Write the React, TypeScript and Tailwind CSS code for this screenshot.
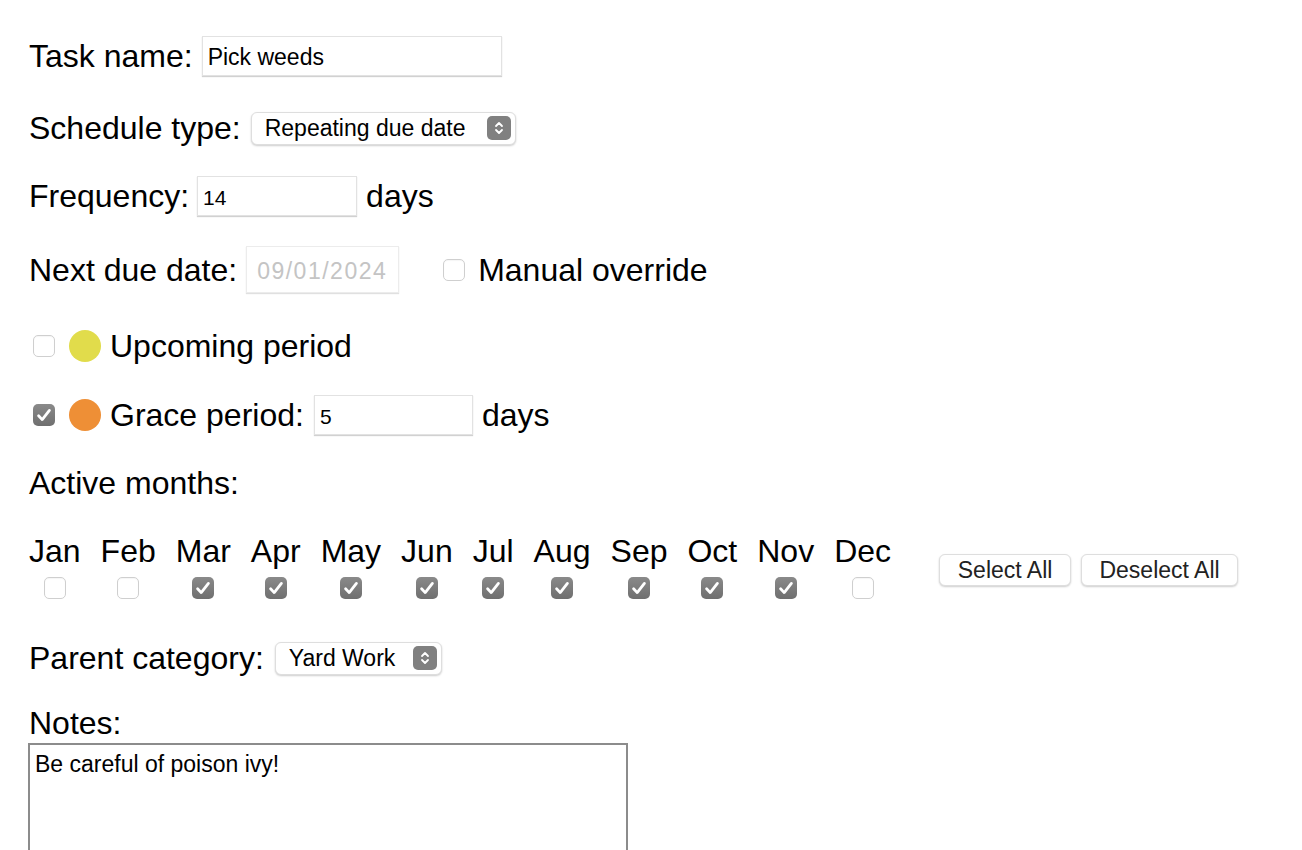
import { ReactNode } from "react";

const font = { fontFamily: '"Liberation Sans", Arial, sans-serif' };

const Check = ({ checked }: { checked: boolean }) => {
  if (!checked) {
    return (
      <div className="h-[22px] w-[22px] shrink-0 rounded-[5px] border border-[#cfcfcf] bg-white shadow-[inset_0_1px_1px_rgba(0,0,0,0.04)]"></div>
    );
  }
  return (
    <div className="flex h-[22px] w-[22px] shrink-0 items-center justify-center rounded-[5px] bg-gradient-to-b from-[#8a8a8a] to-[#6f6f6f]">
      <svg width="16" height="16" viewBox="0 0 16 16" fill="none">
        <path
          d="M2.6 8.8 L6.2 12.6 L13.4 3.4"
          stroke="white"
          strokeWidth="2.8"
          strokeLinecap="round"
          strokeLinejoin="round"
        />
      </svg>
    </div>
  );
};

const TextBox = ({
  value,
  width,
  size = "text-[23px]",
}: {
  value: string;
  width: string;
  size?: string;
}) => (
  <div
    className={`flex h-[40px] ${width} items-center border border-[#e2e2e2] bg-white pl-[5px] pt-[4px] text-black shadow-[0_1px_1px_rgba(0,0,0,0.18)] ${size}`}
  >
    {value}
  </div>
);

const Select = ({ value, width }: { value: string; width: string }) => (
  <div
    className={`flex h-[33px] ${width} items-center justify-between rounded-[6px] border border-[#dedede] bg-white pl-[13px] pr-[4px] text-[23px] shadow-[0_1px_2px_rgba(0,0,0,0.2)]`}
  >
    <span>{value}</span>
    <div className="flex h-[24px] w-[24px] items-center justify-center rounded-[5px] bg-[#808080]">
      <svg width="12" height="16" viewBox="0 0 12 16" fill="none">
        <path
          d="M3 6 L6 3 L9 6 M3 10 L6 13 L9 10"
          stroke="white"
          strokeWidth="1.8"
          strokeLinecap="round"
          strokeLinejoin="round"
        />
      </svg>
    </div>
  </div>
);

const Row = ({ h, children }: { h: string; children: ReactNode }) => (
  <div className={`flex ${h} items-center`}>{children}</div>
);

const months = [
  ["Jan", false],
  ["Feb", false],
  ["Mar", true],
  ["Apr", true],
  ["May", true],
  ["Jun", true],
  ["Jul", true],
  ["Aug", true],
  ["Sep", true],
  ["Oct", true],
  ["Nov", true],
  ["Dec", false],
] as const;

export default function App() {
  return (
    <div
      className="min-h-[850px] w-full bg-white pl-[29px] pt-[20px] text-[32px] text-black"
      style={font}
    >
      <Row h="h-[71px]">
        <span>Task name:</span>
        <div className="ml-[9px]">
          <TextBox value="Pick weeds" width="w-[300px]" />
        </div>
      </Row>

      <Row h="h-[74px]">
        <span>Schedule type:</span>
        <div className="ml-[10px]">
          <Select value="Repeating due date" width="w-[265px]" />
        </div>
      </Row>

      <Row h="h-[61px]">
        <span>Frequency:</span>
        <div className="ml-[8px]">
          <TextBox value="14" width="w-[160px]" size="text-[21px]" />
        </div>
        <span className="ml-[9px]">days</span>
      </Row>

      <Row h="h-[87px]">
        <span>Next due date:</span>
        <div className="ml-[9px] flex h-[47px] w-[153px] items-center border border-[#ececec] bg-white pl-[10px] pt-[4px] text-[23px] tracking-[1.5px] text-[#c4c4c4] shadow-[0_1px_1px_rgba(0,0,0,0.12)]">
          09/01/2024
        </div>
        <div className="ml-[44px]">
          <Check checked={false} />
        </div>
        <span className="ml-[13px]">Manual override</span>
      </Row>

      <Row h="h-[65px]">
        <div className="ml-[4px]">
          <Check checked={false} />
        </div>
        <div className="ml-[14px] h-[32px] w-[32px] rounded-full bg-[#e1dc4b]"></div>
        <span className="ml-[9px]">Upcoming period</span>
      </Row>

      <Row h="h-[74px]">
        <div className="ml-[4px]">
          <Check checked={true} />
        </div>
        <div className="ml-[14px] h-[32px] w-[32px] rounded-full bg-[#ee8f36]"></div>
        <span className="ml-[9px]">Grace period:</span>
        <div className="ml-[10px]">
          <TextBox value="5" width="w-[159px]" size="text-[21px]" />
        </div>
        <span className="ml-[9px]">days</span>
      </Row>

      <Row h="h-[62px]">
        <span>Active months:</span>
      </Row>

      <div className="flex h-[96px] items-start pt-[19px]">
        <div className="flex gap-[20px]">
          {months.map(([m, on]) => (
            <div key={m} className="flex flex-col items-center gap-[7px]">
              <span className="leading-[37px]">{m}</span>
              <Check checked={on} />
            </div>
          ))}
        </div>
        <div className="ml-[48px] mt-[21px] flex gap-[10px] text-[23px]">
          <div className="flex h-[32px] w-[132px] items-center justify-center rounded-[6px] border border-[#dedede] bg-white text-[#222] shadow-[0_1px_2px_rgba(0,0,0,0.2)]">
            Select All
          </div>
          <div className="flex h-[32px] w-[157px] items-center justify-center rounded-[6px] border border-[#dedede] bg-white text-[#222] shadow-[0_1px_2px_rgba(0,0,0,0.2)]">
            Deselect All
          </div>
        </div>
      </div>

      <Row h="h-[96px]">
        <span>Parent category:</span>
        <div className="ml-[11px]">
          <Select value="Yard Work" width="w-[167px]" />
        </div>
      </Row>

      <div className="leading-[35px]">Notes:</div>
      <div className="-ml-[1px] mt-[2px] h-[150px] w-[600px] border-2 border-[#8c8c8c] px-[5px] pt-[6px] text-[23px] leading-[27px]">
        Be careful of poison ivy!
      </div>
    </div>
  );
}
